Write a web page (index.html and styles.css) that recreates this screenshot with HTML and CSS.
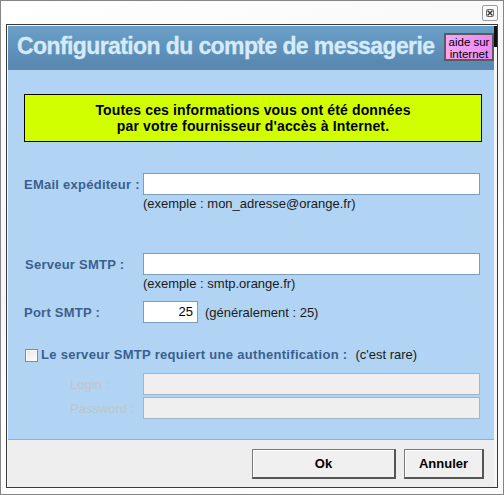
FILE: index.html
```html
<!DOCTYPE html>
<html lang="fr">
<head>
<meta charset="utf-8">
<title>Configuration du compte de messagerie</title>
<link rel="stylesheet" href="styles.css">
</head>
<body>
<div class="window">
  <div class="titlebar">
    <span class="close">
      <svg width="16" height="16" viewBox="0 0 16 16">
        <rect x="0.5" y="0.5" width="15" height="15" rx="1.5" fill="#fafafa" stroke="#9c9c9c"/>
        <rect x="4.5" y="4.5" width="7" height="7" rx="1" fill="none" stroke="#6a6a6a"/>
        <path d="M5.5 5.5 L10.5 10.5 M10.5 5.5 L5.5 10.5" stroke="#333" stroke-width="1.3"/>
      </svg>
    </span>
  </div>
  <div class="frame">
    <span class="edge-mark"></span>
    <div class="header">
      <h1 class="title">Configuration du compte de messagerie</h1>
      <div class="help">aide sur<br>internet</div>
    </div>
    <div class="content">
      <div class="notice">Toutes ces informations vous ont été données<br>par votre fournisseur d'accès à Internet.</div>

      <div class="field field-email">
        <span class="label">EMail expéditeur :</span>
        <span class="input"></span>
        <span class="hint">(exemple : mon_adresse@orange.fr)</span>
      </div>

      <div class="field field-server">
        <span class="label">Serveur SMTP :</span>
        <span class="input"></span>
        <span class="hint">(exemple : smtp.orange.fr)</span>
      </div>

      <div class="field field-port">
        <span class="label">Port SMTP :</span>
        <span class="port-line"><span class="input input-port">25</span><span class="note">(généralement : 25)</span></span>
      </div>

      <div class="auth">
        <span class="checkbox"></span>
        <span class="auth-label">Le serveur SMTP requiert une authentification :</span>
        <span class="note">(c'est rare)</span>
      </div>

      <div class="field field-login">
        <span class="label label-disabled">Login :</span>
        <span class="input input-disabled"></span>
      </div>
      <div class="field field-password">
        <span class="label label-disabled">Password :</span>
        <span class="input input-disabled"></span>
      </div>
    </div>
    <div class="footer">
      <button class="btn btn-ok">Ok</button>
      <button class="btn btn-cancel">Annuler</button>
    </div>
  </div>
</div>
</body>
</html>
```

FILE: styles.css
```css
* { box-sizing: border-box; }
html, body { margin: 0; padding: 0; }
body {
  font-family: "Liberation Sans", Arial, sans-serif;
  background: #ffffff;
}

.window {
  width: 504px;
  height: 495px;
  border: 1px solid #858585;
  background: linear-gradient(160deg, #ffffff 0%, #f6f6f6 45%, #ffffff 60%, #fbfbfb 100%);
  display: flex;
  flex-direction: column;
}

.titlebar {
  height: 23px;
  display: flex;
  justify-content: flex-end;
  padding: 4px 5px 0 0;
}
.close { width: 16px; height: 16px; display: block; }
.close svg { display: block; }

.frame {
  position: relative;
  margin: 0 5px;
  height: 464px;
  border: 1px solid #3a3a3a;
  background: #f6f6f6;
  padding: 1px 3px 0 1px;
  display: flex;
  flex-direction: column;
}
.edge-mark {
  position: absolute;
  right: 0;
  top: 1px;
  width: 3px;
  height: 21px;
  background: #111111;
}

.header {
  height: 44px;
  flex: none;
  display: flex;
  justify-content: space-between;
  align-items: flex-start;
  background: linear-gradient(#6aa0c8, #5887b0);
  border-bottom: 3px solid #5d89b1;
}
.title {
  margin: 6px 0 0 9px;
  font-size: 23px;
  line-height: 28px;
  font-weight: bold;
  letter-spacing: -0.6px;
  color: #d6ebfa;
  -webkit-text-stroke: 0.3px #d6ebfa;
  white-space: nowrap;
}
.help {
  margin-top: 7px;
  width: 50px;
  height: 28px;
  border: 2px solid #5a5a5a;
  background: linear-gradient(90deg, #f6a6f8, #ec88f4);
  color: #000;
  font-size: 11.5px;
  line-height: 12px;
  text-align: center;
  padding-top: 1px;
  white-space: nowrap;
}

.content {
  height: 369px;
  flex: none;
  background: #b1d4f4;
  padding: 24px 0 0 16px;
}

.notice {
  width: 458px;
  height: 48px;
  border: 1px solid #000;
  background: #d2ff00;
  color: #000;
  font-size: 14px;
  font-weight: bold;
  letter-spacing: 0.15px;
  line-height: 16px;
  text-align: center;
  padding-top: 7px;
}

.field {
  display: grid;
  grid-template-columns: 119px 337px;
  align-items: center;
}
.field-email { margin-top: 31px; }
.field-server { margin-top: 42px; }
.field-port { margin-top: 10px; }
.field-login { margin-top: 10px; }
.field-password { margin-top: 2px; }

.label {
  font-size: 13px;
  font-weight: bold;
  letter-spacing: 0.25px;
  color: #3c5f8e;
  white-space: nowrap;
}
.field-server .label { padding-left: 1px; }
.label-disabled {
  font-weight: normal;
  letter-spacing: 0;
  color: #c0c4c9;
  padding-left: 46px;
}

.input {
  display: block;
  height: 22px;
  border: 1px solid #7f9db9;
  background: #ffffff;
  font-size: 13px;
  line-height: 20px;
  color: #000;
}
.input-disabled {
  background: #efefef;
  border-color: #a3b5c9;
}
.hint {
  grid-column: 2;
  margin-top: 1px;
  font-size: 13px;
  line-height: 15px;
  color: #1a1a1a;
  white-space: nowrap;
}

.port-line {
  display: flex;
  align-items: center;
}
.input-port {
  width: 55px;
  text-align: right;
  padding-right: 4px;
}
.note {
  font-size: 13px;
  color: #1a1a1a;
  white-space: nowrap;
}
.port-line .note { margin-left: 7px; }

.auth {
  margin-top: 24px;
  height: 16px;
  display: flex;
  align-items: center;
  line-height: 16px;
}
.checkbox {
  width: 13px;
  height: 13px;
  margin-left: 1px;
  border: 1px solid #8a8a8a;
  background: linear-gradient(135deg, #e6e6e6, #ffffff);
  box-shadow: inset 1px 1px 0 #ffffff;
}
.auth-label {
  margin-left: 3px;
  font-size: 13px;
  font-weight: bold;
  letter-spacing: 0.3px;
  color: #3c5f8e;
  white-space: nowrap;
}
.auth .note { margin-left: 8px; }

.footer {
  height: 48px;
  flex: none;
  border-top: 1px solid #a9a9a9;
  background: #eeeeee;
  display: flex;
  justify-content: flex-end;
  align-items: flex-start;
  gap: 8px;
  padding: 9px 10px 0 0;
}
.btn {
  height: 30px;
  margin: 0;
  padding: 0;
  font-family: "Liberation Sans", Arial, sans-serif;
  font-size: 13px;
  font-weight: bold;
  color: #000;
  background: #f0f0f0;
  border-style: solid;
  border-width: 1px 2px 2px 1px;
  border-color: #7a7a7a #555555 #555555 #7a7a7a;
  box-shadow: inset 1px 1px 0 #ffffff;
}
.btn-ok { width: 144px; }
.btn-cancel { width: 80px; }
```
